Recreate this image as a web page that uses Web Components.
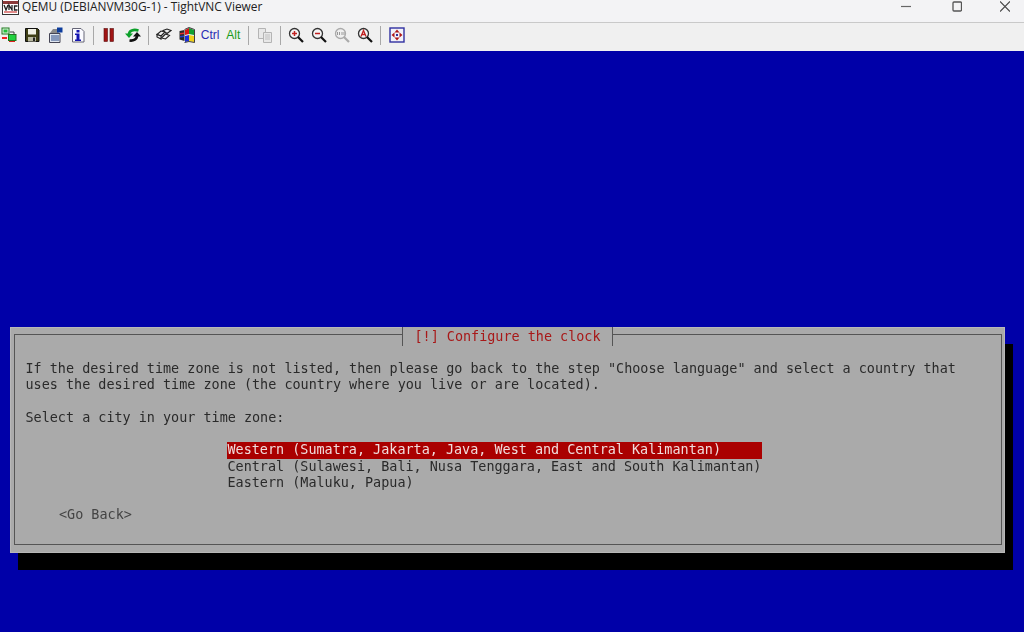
<!DOCTYPE html>
<html>
<head>
<meta charset="utf-8">
<title>QEMU (DEBIANVM30G-1) - TightVNC Viewer</title>
<style>
html, body { margin: 0; height: 100%; }
body { font-family: "Open Sans", "Liberation Sans", sans-serif; overflow: hidden; }
vnc-window { height: 632px; }
</style>
</head>
<body>
<vnc-window>
  <title-bar slot="title">QEMU (DEBIANVM30G-1) - TightVNC Viewer</title-bar>
  <tool-bar slot="tools"></tool-bar>
  <install-dialog heading="[!] Configure the clock">
    <p>If the desired time zone is not listed, then please go back to the step "Choose language" and select a country that<br>uses the desired time zone (the country where you live or are located).</p>
    <p>Select a city in your time zone:</p>
    <zone-list slot="list">
      <span class="on">Western (Sumatra, Jakarta, Java, West and Central Kalimantan)</span>
      <span>Central (Sulawesi, Bali, Nusa Tenggara, East and South Kalimantan)</span>
      <span>Eastern (Maluku, Papua)</span>
    </zone-list>
    <span slot="back">&lt;Go Back&gt;</span>
  </install-dialog>
</vnc-window>

<script>
class VncWindow extends HTMLElement {
    constructor() {
        super();
        this.attachShadow({ mode: 'open' });
        this.shadowRoot.innerHTML = `
            <style>
                :host { display: flex; flex-direction: column; background: #0000a8; }
                .screen { flex: 1; display: flex; flex-direction: column; justify-content: flex-end; padding: 0 19px 79px 9.5px; }
            </style>
            <slot name="title"></slot>
            <slot name="tools"></slot>
            <div class="screen"><slot></slot></div>
        `;
    }
}

class TitleBar extends HTMLElement {
    constructor() {
        super();
        this.attachShadow({ mode: 'open' });
        this.shadowRoot.innerHTML = `
            <style>
                :host { display: flex; align-items: flex-start; height: 22px; background: #f3f3f5; border-bottom: 1px solid #c9c9c9; font: 11.9px/13px "Open Sans", sans-serif; color: #222; }
                .logo { width: 17px; height: 15px; margin: 0 3px 0 2px; flex: none; }
                .text { flex: 1; white-space: nowrap; }
                .btns { display: flex; padding: 1px 14px 0 0; }
                .btns svg { width: 10px; height: 11px; display: block; }
                .btns svg + svg { margin-left: 41px; }
                .btns svg + svg + svg { margin-left: 38px; }
            </style>
            <svg class="logo" viewBox="0 0 17 15">
                <rect x="0.500" y="-1" width="16" height="15.500" fill="#fff" stroke="#333"/>
                <path d="M1 1h15v3H1z" fill="#8c3a3a"/>
                <path d="M2 5l2 5 2-5M7 10V5l3 5V5" fill="none" stroke="#222" stroke-width="1.300"/>
                <path d="M15.500 6h-3v4h3" fill="none" stroke="#222" stroke-width="1.300"/>
                <rect x="2" y="11" width="13" height="2" fill="#e08888"/>
            </svg>
            <span class="text"><slot></slot></span>
            <div class="btns">
                <svg viewBox="0 0 10 11"><path d="M0 5.500h10" stroke="#666" stroke-width="1.200"/></svg>
                <svg viewBox="0 0 10 11"><rect x="1" y="1" width="8.500" height="9" rx="1" fill="none" stroke="#555" stroke-width="1.300"/></svg>
                <svg viewBox="0 0 10 11"><path d="M0 .5l10 10M10 .5L0 10.500" stroke="#444" stroke-width="1.200"/></svg>
            </div>
        `;
    }
}

// each toolbar button is a little 16x16 drawing, null is a separator
const TOOLS = [
    `<rect x="1" y="1" width="7" height="6" fill="#e4f4e4" stroke="#1c7a1c"/><rect x="2.500" y="2.500" width="4" height="3" fill="#22c03a"/><rect x="7.500" y="7.500" width="7.500" height="6" fill="#22d040" stroke="#1c7a1c"/><path d="M1 10h5v2H1z" fill="#ee2222"/><path d="M9 5h4v3" fill="none" stroke="#444"/><path d="M8 14.500h6" stroke="#e02020"/>`,
    `<path d="M1.500 1.500h12l1.500 1.500v11.500H1.500z" fill="#3e3e14" stroke="#111"/><rect x="4" y="2" width="8" height="5.500" fill="#f0f0e4"/><rect x="4" y="10" width="8" height="4.500" fill="#b8b8a0"/><rect x="9" y="10.500" width="2" height="3.500" fill="#222"/>`,
    `<path d="M2.500 6.500h10.500v9H2.500z" fill="#dfe6f0" stroke="#445"/><path d="M4 9h8M4 11h8M4 13h8" stroke="#2c4a86"/><path d="M3 6l3-4h4l2 4z" fill="#8a8a8a"/><rect x="10" y="0.500" width="5.500" height="5" fill="#0c3c9c"/>`,
    `<path d="M2.500 1.500h8.500l3 3v10.500H2.500z" fill="#fafaff" stroke="#667"/><rect x="6.500" y="3" width="3" height="2.500" fill="#1414b0"/><path d="M5 6.500h4.500v6H11V14H5v-1.500h1.500v-4.500H5z" fill="#1414b0"/>`,
    null,
    `<rect x="3" y="1.500" width="3.500" height="13" fill="#a01414" stroke="#5a1010" stroke-width=".6"/><rect x="9" y="1.500" width="3.500" height="13" fill="#a01414" stroke="#5a1010" stroke-width=".6"/>`,
    `<path d="M4 7.500C4 3.500 8.500 2 13.500 3.500" fill="none" stroke="#0ca02a" stroke-width="2.600"/><path d="M0 6.500h8L4 11z" fill="#0ca02a"/><path d="M12 8.500c0 4-3.500 5.500-7.500 5" fill="none" stroke="#111" stroke-width="2.600"/><path d="M8 9.500h8L12 5z" fill="#111"/>`,
    null,
    `<g fill="#eee" stroke="#222" stroke-width="1.100"><path d="M1 7.500l4-3.500 4 1-4 4z"/><path d="M5.500 11l4-4 4 1.500-4 3.500z"/><path d="M1 7.500v2.500l4 2v-3z"/><path d="M7 3.500l4-1.500 4 1.500-4 3z"/></g>`,
    `<path d="M0.500 4l5-1v11l-5-1.500z" fill="#2a2a2a"/><path d="M1 6l4-.5v1.500l-4 .5z" fill="#e03030"/><path d="M1 9l4-.5V10l-4 .5z" fill="#2040d0"/><path d="M6 3l4-2v6l-4 1z" fill="#d81818"/><path d="M10 1l5 2v5l-5-1z" fill="#10a030"/><path d="M6 9l4-1v6l-4 1z" fill="#1c30d8"/><path d="M10 8l5 1v6l-5-1z" fill="#f0d018"/><path d="M5.500 2.500L10 .5l5.500 2v13L10 14.500l-4.500 1" fill="none" stroke="#111" stroke-width=".8"/>`,
    'Ctrl',
    'Alt',
    null,
    `<g fill="#e8e8e8" stroke="#b4b4b4"><path d="M1.500 1.500h7v10h-7z"/><path d="M6.500 5.500h8v10h-8z"/></g><path d="M8 8h5M8 10h5M8 12h5" stroke="#c0c0c0"/>`,
    null,
    `<circle cx="6.500" cy="6.500" r="5" fill="#f4f4f4" stroke="#333" stroke-width="1.300"/><path d="M4 6.500h5M6.500 4v5" stroke="#c02020" stroke-width="1.500"/><path d="M10 10l5 5" stroke="#111" stroke-width="2.200"/>`,
    `<circle cx="6.500" cy="6.500" r="5" fill="#f4f4f4" stroke="#333" stroke-width="1.300"/><path d="M4 6.500h5" stroke="#c02020" stroke-width="1.500"/><path d="M10 10l5 5" stroke="#111" stroke-width="2.200"/>`,
    `<circle cx="6.500" cy="6.500" r="5" fill="#efefef" stroke="#aaa" stroke-width="1.300"/><path d="M3.500 5v3M5.500 5v3M8 5v3M10 5v3" stroke="#999"/><path d="M10 10l5 5" stroke="#aaa" stroke-width="2.200"/>`,
    `<circle cx="6.500" cy="6.500" r="5" fill="#f4f4f4" stroke="#333" stroke-width="1.300"/><path d="M4 9.500l2.500-6 2.500 6M5 7.500h3" fill="none" stroke="#c02020" stroke-width="1.300"/><path d="M10 10l5 5" stroke="#111" stroke-width="2.200"/>`,
    null,
    `<rect x="1" y="1" width="14" height="14" fill="#f2f2fa" stroke="#3030a0" stroke-width="1.400"/><path d="M8 2.500l2.500 3h-5zM8 13.500l2.500-3h-5zM2.500 8l3-2.500v5zM13.500 8l-3-2.500v5z" fill="#b01818"/><rect x="7" y="7" width="2" height="2" fill="#3030a0"/>`
];

class ToolBar extends HTMLElement {
    constructor() {
        super();
        this.attachShadow({ mode: 'open' });
        const items = TOOLS.map(t => {
            if (t === null) return '<i class="sep"></i>';
            if (t === 'Ctrl' || t === 'Alt') return `<b class="${t}">${t}</b>`;
            return `<svg viewBox="0 0 16 16">${t}</svg>`;
        }).join('');
        this.shadowRoot.innerHTML = `
            <style>
                :host { display: flex; align-items: center; gap: 7.15px; height: 28px; padding: 0 0 4px 0.7px; background: #f0f0f0; box-sizing: border-box; }
                svg { width: 16px; height: 16px; flex: none; }
                .sep { width: 1px; height: 19px; background: #a8a8a8; flex: none; }
                b { width: 16px; flex: none; display: flex; justify-content: center; font: 12px "Liberation Sans", sans-serif; }
                .Ctrl { color: #2a2ab4; }
                .Alt { color: #1a9c1a; }
            </style>
            ${items}
        `;
    }
}

class InstallDialog extends HTMLElement {
    constructor() {
        super();
        this.attachShadow({ mode: 'open' });
        this.shadowRoot.innerHTML = `
            <style>
                :host { display: block; position: relative; background: #aaaaaa; padding: 7px 3px 8px 4px; box-shadow: 8px 17px 0 #000, 0 0 0 1px #b8b8b8 inset; font: 13.45px/16.25px "DejaVu Sans Mono", "Liberation Mono", monospace; color: #2a2a2a; height: 226px; box-sizing: border-box; }
                .frame { border: 1.500px solid #555; height: 100%; box-sizing: border-box; padding: 26px 12px 0 11px; white-space: nowrap; }
                .frame > * , .heading span { filter: blur(.35px); }
                .heading { position: absolute; top: 0; left: 392.500px; width: 211px; height: 19px; padding-top: 1px; box-sizing: border-box; display: flex; align-items: center; justify-content: center; background: #aaaaaa; color: #a81818; border: solid #555; border-width: 0 1.500px; }
                ::slotted(p) { margin: 0 0 16.25px; }
                .list { margin: 7.500px 0 0 201px; }
                .back { margin: 16px 0 0 33.500px; color: #444; }
            </style>
            <div class="heading"><span></span></div>
            <div class="frame">
                <div class="intro"><slot></slot></div>
                <div class="list"><slot name="list"></slot></div>
                <div class="back"><slot name="back"></slot></div>
            </div>
        `;
        this.shadowRoot.querySelector('.heading span').textContent = this.getAttribute('heading');
    }
}

class ZoneList extends HTMLElement {
    constructor() {
        super();
        this.attachShadow({ mode: 'open' });
        this.shadowRoot.innerHTML = `
            <style>
                :host { display: block; width: 535px; }
                ::slotted(span) { display: block; padding-left: 1px; }
                ::slotted(.on) { background: #aa0000; color: #f0dcdc; }
            </style>
            <slot></slot>
        `;
    }
}

customElements.define('vnc-window', VncWindow);
customElements.define('title-bar', TitleBar);
customElements.define('tool-bar', ToolBar);
customElements.define('install-dialog', InstallDialog);
customElements.define('zone-list', ZoneList);
</script>
</body>
</html>
